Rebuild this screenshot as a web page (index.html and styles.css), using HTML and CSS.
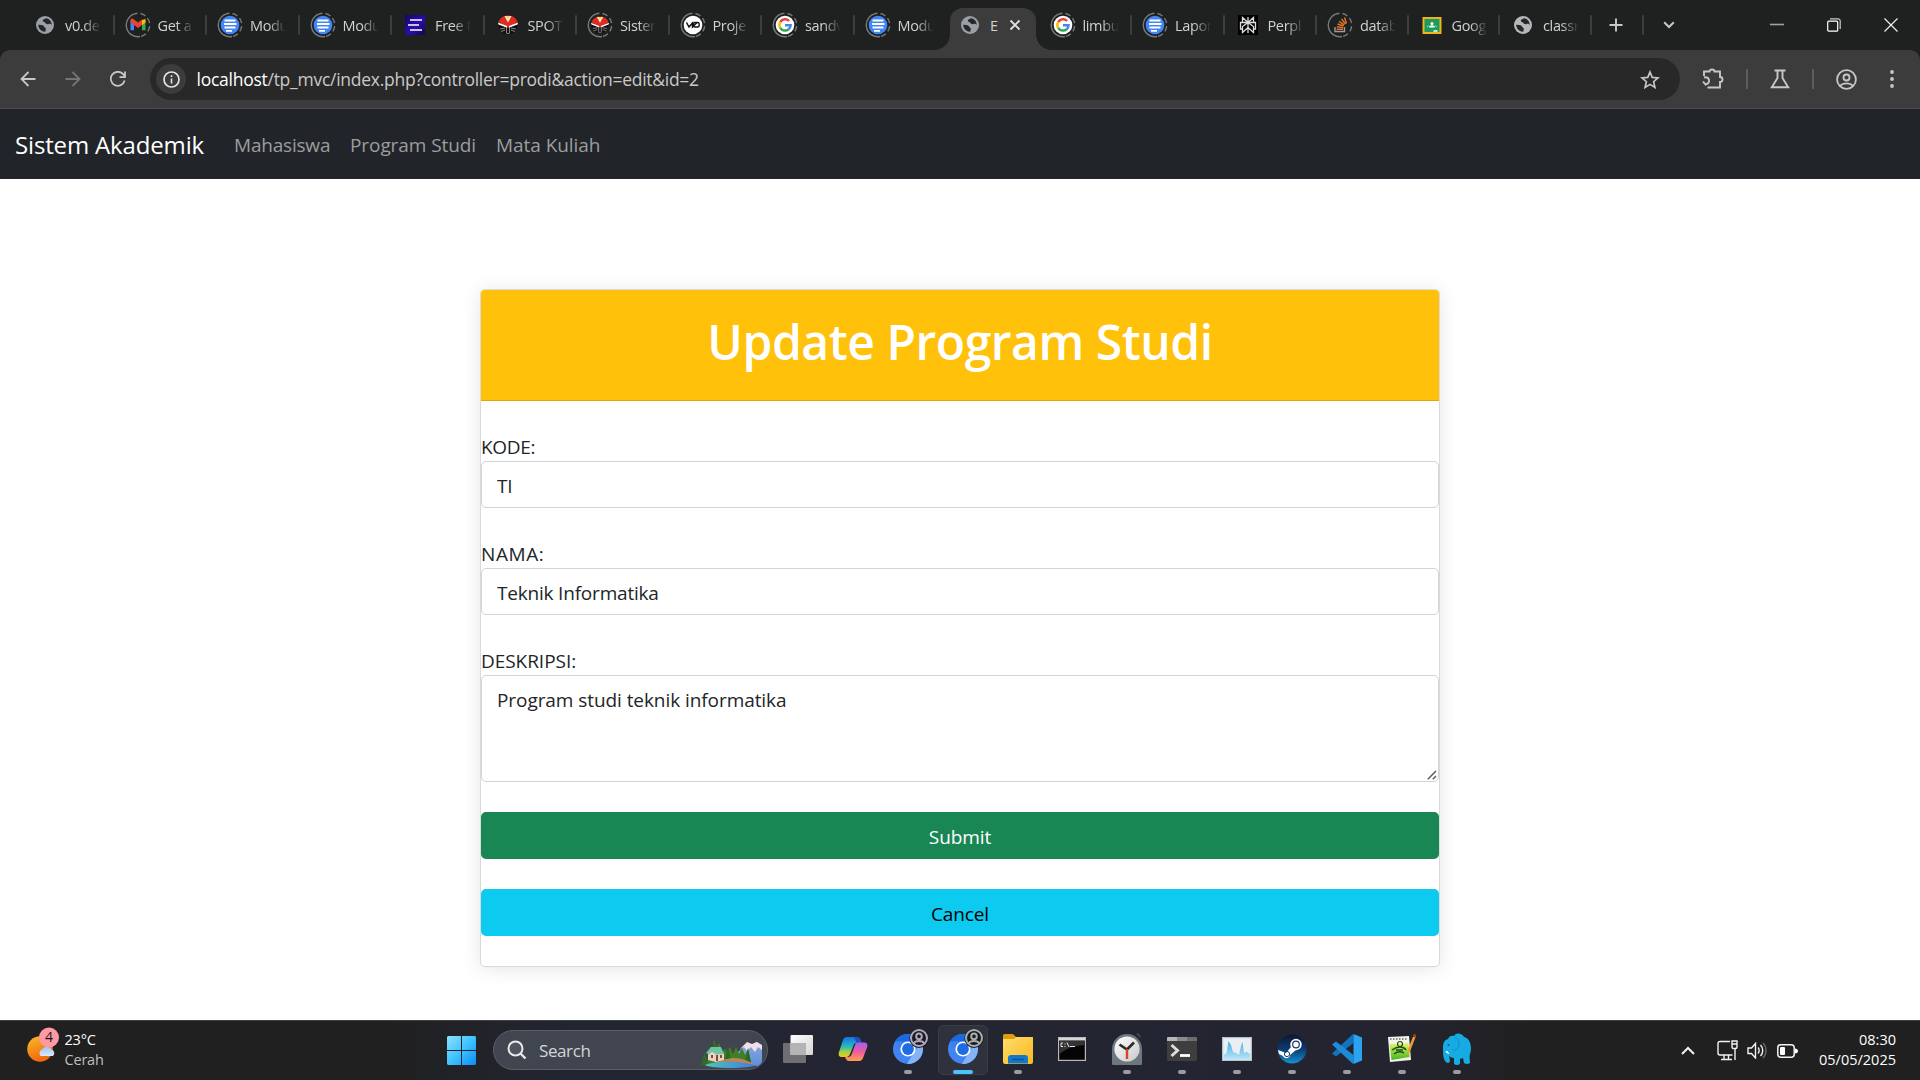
FILE: index.html
```html
<!DOCTYPE html>
<html lang="id">
<head>
<meta charset="utf-8">
<title>Edit Program Studi</title>
<link rel="stylesheet" href="styles.css">
</head>
<body>
<svg class="defs" aria-hidden="true">
  <defs>
    <linearGradient id="gFree" x1="0" y1="0" x2="1" y2="1"><stop offset="0" stop-color="#12095c"/><stop offset=".55" stop-color="#2b0bb5"/><stop offset="1" stop-color="#10083f"/></linearGradient>
    <linearGradient id="gWin" x1="0" y1="0" x2="1" y2="1"><stop offset="0" stop-color="#8fe0ff"/><stop offset=".5" stop-color="#3fc3ff"/><stop offset="1" stop-color="#0a8cf5"/></linearGradient>
    <linearGradient id="gSun" x1="0" y1="0" x2="0.4" y2="1"><stop offset="0" stop-color="#f8bd27"/><stop offset="1" stop-color="#f2660f"/></linearGradient>
    <linearGradient id="gCloud" x1="0" y1="0" x2="0" y2="1"><stop offset="0" stop-color="#9fc3f5"/><stop offset="1" stop-color="#dce9fd"/></linearGradient>
    <linearGradient id="gFolder" x1="0" y1="0" x2="1" y2="1"><stop offset="0" stop-color="#ffdc6b"/><stop offset="1" stop-color="#fbb920"/></linearGradient>
    <linearGradient id="gTask" x1="0" y1="0" x2="1" y2="1"><stop offset="0" stop-color="#fff"/><stop offset="1" stop-color="#d5d5d5"/></linearGradient>
    <linearGradient id="gCopA" x1="0" y1="0" x2="0" y2="1"><stop offset="0" stop-color="#1a6fe0"/><stop offset=".45" stop-color="#22b5c9"/><stop offset=".75" stop-color="#9fd53d"/><stop offset="1" stop-color="#f6c61c"/></linearGradient>
    <linearGradient id="gCopB" x1="0" y1="0" x2="0" y2="1"><stop offset="0" stop-color="#a45df0"/><stop offset=".5" stop-color="#ee5c9c"/><stop offset="1" stop-color="#ffa04e"/></linearGradient>
    <linearGradient id="gSteam" x1="0" y1="0" x2="0" y2="1"><stop offset="0" stop-color="#10152f"/><stop offset=".5" stop-color="#0c3a72"/><stop offset="1" stop-color="#1590cf"/></linearGradient>
    <linearGradient id="gClock" x1="0" y1="0" x2="1" y2="1"><stop offset="0" stop-color="#fff"/><stop offset="1" stop-color="#c8c8c8"/></linearGradient>
    <linearGradient id="gPerf" x1="0" y1="0" x2="0" y2="1"><stop offset="0" stop-color="#48aee0"/><stop offset="1" stop-color="#b9e4fa"/></linearGradient>
    <linearGradient id="gGreen" x1="0" y1="0" x2="0" y2="1"><stop offset="0" stop-color="#e5f76d"/><stop offset="1" stop-color="#41b51e"/></linearGradient>
    <linearGradient id="gLake" x1="0" y1="0" x2="1" y2="0"><stop offset="0" stop-color="#49c7b5"/><stop offset="1" stop-color="#4778e0"/></linearGradient>
    <linearGradient id="gMount" x1="0" y1="0" x2="0" y2="1"><stop offset="0" stop-color="#8fa9d8"/><stop offset="1" stop-color="#5a8fdc"/></linearGradient>
  </defs>
  <symbol id="globe" viewBox="0 0 18 18"><circle cx="9" cy="9" r="9" fill="currentColor"/><path d="M2.200 8.800C3.500 9 5.500 8.800 7 9.500c1.500.7.700 2 2.200 2.200.9.100.6 1.600.1 4C6 16 2.300 13 2.200 8.800zM9.800 2.200c-.8 1-2.900 1-3 2.400-.1 1.600 1.800 1.200 2.300 2.100.6 1.200 2.200 1.800 3.600 1.300 1.200-.5 2.200.3 2.900 1C15.800 5 13 2.400 9.800 2.200z" fill="#25282a"/></symbol>
  <symbol id="ring" viewBox="0 0 26 26"><circle cx="13" cy="13" r="11.700" fill="none" stroke="#777b7e" stroke-width="1.400" stroke-dasharray="38 3 5.500 3 5.500 3 5.500 3 5.500 1.500" transform="rotate(80 13 13)"/></symbol>
  <symbol id="docs" viewBox="0 0 26 26"><use href="#ring"/><circle cx="13" cy="13" r="9.300" fill="#4285f4"/><path d="M7.500 8.500h11M7 12h12.500M7.500 15.500h11M9 18.800h6" stroke="#fff" stroke-width="1.800"/></symbol>
  <symbol id="gmail" viewBox="0 0 26 26"><use href="#ring"/><path d="M5.500 8.500v9.700h3.500v-7z" fill="#4285f4"/><path d="M20.500 8.500v9.700H17v-7z" fill="#34a853"/><path d="M17 8l3.500-1v3.500L17 13z" fill="#fbbc04"/><path d="M5.500 8c0-1.500 2-2 3.500-.6l4 3 4-3V13l-4 3-4-3-3.500-2.500z" fill="#ea4335"/></symbol>
  <symbol id="free" viewBox="0 0 20 20"><rect width="20" height="20" rx="2" fill="url(#gFree)"/><path d="M5 5h12M3 10h11M5 15h12" stroke="#fff" stroke-width="1.700"/></symbol>
  <symbol id="spot" viewBox="0 0 20 20"><circle cx="10" cy="10" r="9.500" fill="#111"/><path d="M.5 7C2 2.500 6 .5 10 .5S18 2.500 19.500 7L10 13z" fill="#e02b22"/><path d="M6.500 1l3.500 6.500L13.500 1z" fill="#f7efc4"/><path d="M8.300 1L10 3.500 11.700 1z" fill="#f6ca18"/><path d="M0 7.500L9 11v8h2v-8l9-3.500-.5 2L11.500 12.500v6h-3v-6L.5 9.500z" fill="#fff"/><path d="M2 14l5-1M3 16.500l4-1.500M18 14l-5-1M17 16.500L13 15" stroke="#888"/></symbol>
  <symbol id="spotring" viewBox="0 0 26 26"><use href="#ring"/><use href="#spot" x="4" y="4" width="18" height="18"/></symbol>
  <symbol id="vz" viewBox="0 0 26 26"><use href="#ring"/><circle cx="13" cy="13" r="9.300" fill="#fff"/><path d="M6.500 10.500l2.500 4.500 3.500-4v4l4.500-4.500" fill="none" stroke="#111" stroke-width="1.500"/><rect x="13.500" y="10.500" width="5.700" height="4.500" rx="1.500" fill="none" stroke="#111" stroke-width="1.400"/></symbol>
  <symbol id="google" viewBox="0 0 26 26"><use href="#ring"/><circle cx="13" cy="13" r="9.300" fill="#fff"/><g fill="none" stroke-width="2.500"><path d="M17.100 9A5.600 5.600 0 0 0 8.200 10.100" stroke="#ea4335"/><path d="M8.200 10.100a5.600 5.600 0 0 0 0 5.800" stroke="#fbbc05"/><path d="M8.200 15.900a5.600 5.600 0 0 0 8.500 1.300" stroke="#34a853"/><path d="M16.700 17.200a5.600 5.600 0 0 0 1.900-3.900H13" stroke="#4285f4"/></g></symbol>
  <symbol id="perp" viewBox="0 0 20 20"><rect width="20" height="20" fill="#000"/><path d="M10 2v16M4.500 2.500L10 7.500l5.500-5V7.500h-11zM4.500 7.500H2.500v6.500h2V11.500L10 7.500l5.500 4V14h2V7.500h-2M4.500 12v5.500L10 12.500l5.500 5V12" fill="none" stroke="#ddd" stroke-width="1.300"/></symbol>
  <symbol id="so" viewBox="0 0 26 26"><use href="#ring"/><path d="M8 15v4.500h9.500V15" fill="none" stroke="#9a9b9b" stroke-width="1.400"/><path d="M9.700 17.300h6.300M9.800 14.800l6.300.8M10.500 12l6 2M12 9.300l5.300 3.500M14.500 7l4 5M17.500 5.500l2 6" stroke="#e0732a" stroke-width="1.400"/></symbol>
  <symbol id="classroom" viewBox="0 0 19 17"><rect x="1" y="1" width="17" height="15" fill="#1d9b5e" stroke="#f2b41b" stroke-width="2"/><circle cx="9.500" cy="6.500" r="1.500" fill="#fff"/><path d="M6.500 10.500c0-3 6-3 6 0M4.500 10.500c0-2 2-2 2-2M14.500 10.500c0-2-2-2-2-2" fill="#fff"/><path d="M11 14h4" stroke="#fff" stroke-width="1.500"/></symbol>
  <symbol id="chromium" viewBox="0 0 36 36"><circle cx="15" cy="20" r="15" fill="#4083f1"/><path d="M2 12.500A15 15 0 0 1 28 12.500H15z" fill="#1a69e2"/><path d="M2 12.500L8.500 24 15 20V12.500z" fill="#3c80f0"/><path d="M28.500 13.500A15 15 0 0 1 14 35l7-12z" fill="#85b3f8"/><circle cx="15" cy="20" r="7.600" fill="#fff"/><circle cx="15" cy="20" r="5.900" fill="#1c6ce5"/><circle cx="26" cy="9.500" r="9.600" fill="#191b20"/><circle cx="26" cy="9" r="8" fill="none" stroke="currentColor" stroke-width="2"/><circle cx="26" cy="7.400" r="2.800" fill="none" stroke="currentColor" stroke-width="2"/><path d="M20.500 14.500c2-3.500 9-3.500 11 0" fill="none" stroke="currentColor" stroke-width="2"/></symbol>
</svg>

<header class="browser">
  <div class="tabstrip">
    <div class="tab"><svg class="fav globe"><use href="#globe"/></svg><span class="title">v0.de</span></div>
    <div class="tab"><svg class="fav ring"><use href="#gmail"/></svg><span class="title">Get a</span></div>
    <div class="tab"><svg class="fav ring"><use href="#docs"/></svg><span class="title">Modu</span></div>
    <div class="tab"><svg class="fav ring"><use href="#docs"/></svg><span class="title">Modu</span></div>
    <div class="tab"><svg class="fav"><use href="#free"/></svg><span class="title">Free I</span></div>
    <div class="tab"><svg class="fav"><use href="#spot"/></svg><span class="title">SPOT</span></div>
    <div class="tab"><svg class="fav ring"><use href="#spotring"/></svg><span class="title">Sister</span></div>
    <div class="tab"><svg class="fav ring"><use href="#vz"/></svg><span class="title">Proje</span></div>
    <div class="tab"><svg class="fav ring"><use href="#google"/></svg><span class="title">sandv</span></div>
    <div class="tab bare"><svg class="fav ring"><use href="#docs"/></svg><span class="title">Modu</span></div>
    <div class="tab bare active"><svg class="fav globe"><use href="#globe"/></svg><span class="title">E</span><svg class="close" viewBox="0 0 12 12"><path d="M1.500 1.500l9 9M10.500 1.500l-9 9" stroke="#e3e3e3" stroke-width="1.800"/></svg></div>
    <div class="tab"><svg class="fav ring"><use href="#google"/></svg><span class="title">limbu</span></div>
    <div class="tab"><svg class="fav ring"><use href="#docs"/></svg><span class="title">Lapor</span></div>
    <div class="tab"><svg class="fav"><use href="#perp"/></svg><span class="title">Perpl</span></div>
    <div class="tab slim"><svg class="fav ring"><use href="#so"/></svg><span class="title">datab</span></div>
    <div class="tab slim"><svg class="fav room"><use href="#classroom"/></svg><span class="title">Goog</span></div>
    <div class="tab slim"><svg class="fav globe pale"><use href="#globe"/></svg><span class="title">classr</span></div>
    <div class="newtab"><svg width="14" height="14" viewBox="0 0 14 14"><path d="M7 .5v13M.5 7h13" stroke="#c8c8c8" stroke-width="1.900"/></svg></div>
    <div class="tabsearch"><svg width="12" height="8" viewBox="0 0 12 8"><path d="M1.200 1.200L6 6l4.800-4.800" fill="none" stroke="#c8c8c8" stroke-width="2"/></svg></div>
    <div class="winctl">
      <svg width="14" height="14" viewBox="0 0 14 14"><path d="M0 6.500h14" stroke="#a0a0a0" stroke-width="1.600"/></svg>
      <svg width="14" height="14" viewBox="0 0 14 14"><rect x=".7" y="3.200" width="10" height="10" rx="1" fill="none" stroke="#fff" stroke-width="1.200"/><path d="M3 .8h8a2.200 2.200 0 0 1 2.200 2.200v8" fill="none" stroke="#ccc" stroke-width="1.200"/></svg>
      <svg width="14" height="14" viewBox="0 0 14 14"><path d="M.5.5l13 13M13.500.5l-13 13" stroke="#eee" stroke-width="1.200"/></svg>
    </div>
  </div>
  <div class="toolbar">
    <div class="navbtns">
      <svg width="16" height="16" viewBox="0 0 16 16"><path d="M15.500 8H1.500M8.500 1L1.500 8l7 7" fill="none" stroke="#c7c7c7" stroke-width="1.800"/></svg>
      <svg width="16" height="16" viewBox="0 0 16 16"><path d="M.5 8h14M7.500 1l7 7-7 7" fill="none" stroke="#757575" stroke-width="1.800"/></svg>
      <svg width="16" height="16" viewBox="0 0 16 16"><path d="M14.600 9.500a7 7 0 1 1-1.500-6.300L15 5.500M15 .5v5.700H9.500" fill="none" stroke="#c7c7c7" stroke-width="1.800"/></svg>
    </div>
    <div class="omnibox">
      <span class="siteinfo"><svg width="17" height="17" viewBox="0 0 17 17"><circle cx="8.500" cy="8.500" r="7.500" fill="none" stroke="#e3e3e3" stroke-width="1.700"/><path d="M8.500 7.500v5M8.500 4.300v1.700" stroke="#e3e3e3" stroke-width="1.600"/></svg></span>
      <span class="url"><b>localhost</b>/tp_mvc/index.php?controller=prodi&amp;action=edit&amp;id=2</span>
      <svg class="star" width="20" height="19" viewBox="0 0 20 19"><path d="M10 2l2.200 5.400 5.800.5-4.400 3.800 1.300 5.700L10 14.400l-4.900 3 1.300-5.700L2 7.900l5.800-.5z" fill="none" stroke="#c7c7c7" stroke-width="1.700"/></svg>
    </div>
    <div class="actions">
      <svg width="22" height="22" viewBox="0 0 22 22"><path d="M2 8V3.500h5.500a2.500 2 0 0 1 5 0H18V9a2.200 2.200 0 0 1 0 5v5.500H5.500M2 9.500c2.500-.5 4.500.5 5 2.500s-1 4-3.500 4.500M1 13.500l2.500 3L7 14.500" fill="none" stroke="#c7c7c7" stroke-width="1.900"/></svg>
      <i></i>
      <svg width="20" height="20" viewBox="0 0 20 20"><path d="M4.500 1.500h11M7.500 2v7L1.800 18.300h16.400L12.500 9V2" fill="none" stroke="#c7c7c7" stroke-width="1.900"/></svg>
      <i></i>
      <svg width="21" height="21" viewBox="0 0 21 21"><circle cx="10.500" cy="10.500" r="9.400" fill="none" stroke="#c7c7c7" stroke-width="1.800"/><circle cx="10.500" cy="8.500" r="3" fill="none" stroke="#c7c7c7" stroke-width="1.800"/><path d="M4 17c3-3.500 10-3.500 13 0" fill="none" stroke="#c7c7c7" stroke-width="1.800"/></svg>
      <svg class="menu" width="4" height="18" viewBox="0 0 4 18"><g fill="#c7c7c7"><circle cx="2" cy="2" r="1.900"/><circle cx="2" cy="9" r="1.900"/><circle cx="2" cy="16" r="1.900"/></g></svg>
    </div>
  </div>
</header>

<nav class="navbar">
  <a class="brand">Sistem Akademik</a>
  <a class="link">Mahasiswa</a>
  <a class="link studi">Program Studi</a>
  <a class="link matkul">Mata Kuliah</a>
</nav>

<main class="page">
  <form class="card">
    <div class="card-header"><h1>Update Program Studi</h1></div>
    <div class="field"><label>KODE:</label><input type="text" value="TI"></div>
    <div class="field"><label class="nama">NAMA:</label><input type="text" value="Teknik Informatika"></div>
    <div class="field"><label class="desk">DESKRIPSI:</label><textarea>Program studi teknik informatika</textarea>
      <svg class="grip" width="10" height="10" viewBox="0 0 10 10"><path d="M.8 9.200L9 1M5.800 9.200L9 6" stroke="#555" stroke-width="1.400"/></svg></div>
    <button type="button" class="btn success">Submit</button>
    <button type="button" class="btn info">Cancel</button>
  </form>
</main>

<footer class="taskbar">
  <div class="weather">
    <svg width="34" height="36" viewBox="0 0 34 36"><circle cx="13" cy="22" r="12.800" fill="url(#gSun)"/><path d="M14 29a3.700 3.700 0 0 1 1-6.500 5.500 5.500 0 0 1 9.500 0 3.500 3.500 0 0 1 1 6.500z" fill="url(#gCloud)"/><circle cx="22" cy="10.500" r="10" fill="#ff99a4"/></svg>
    <span class="count">4</span>
    <div class="lines"><span>23°C</span><span class="dim">Cerah</span></div>
  </div>
  <div class="apps">
    <div class="start"><svg width="29" height="29" viewBox="0 0 29 29"><path d="M1 0h13v14H0V1zM15 0h13l1 1v13H15zM0 15h14v14H1l-1-1zM15 15h14v13l-1 1H15z" fill="url(#gWin)"/></svg></div>
    <div class="search">
      <svg width="20" height="20" viewBox="0 0 20 20"><circle cx="8.500" cy="8.500" r="7" fill="#50545e" stroke="#e8e8e8" stroke-width="2"/><path d="M13.500 13.500l5 5" stroke="#e8e8e8" stroke-width="2.400"/></svg>
      <span>Search</span>
      <svg class="scene" width="62" height="30" viewBox="0 0 62 30"><path d="M37 24V13l9-9 4 3 5-4 6 4v16a12 12 0 0 1-4 4z" fill="url(#gMount)"/><path d="M39 10l7-7 5 2 5-2 5 3v5l-4-3-3 5-4-5-4 4-3-4z" fill="#f1dfeb"/><path d="M6 24l3-16 2 3 2-10 3 8 2-5 3 9 3-3 2 3 3-5 3 7 3-7 3 7 3-6 3 7 3-6 3 15z" fill="#437d27"/><path d="M13 1l3 13h-6zM27 7l3 15h-6zM47 9l3 14h-6z" fill="#2c6a22"/><path d="M0 26L3.500 13 7 26z" fill="#2f6c2a"/><path d="M4 26c16-3 20-7 29-7s17 4 22 8z" fill="#bd8553"/><path d="M4 26c18-6 36-3 51 0-4 4-47 4-51 0z" fill="url(#gLake)"/><path d="M7 14l8-3 8 3v7l-8 2-8-2z" fill="#ead4bd"/><path d="M5 14l5-6h10l3 7-8 .5-4-3-3 3z" fill="#6cc4a5"/><path d="M10 16h2v3h-2zM15 16h2v6h-2zM19 16h2v3h-2z" fill="#83483d"/></svg>
    </div>
    <div class="app"><svg width="30" height="30" viewBox="0 0 30 30"><rect y="9" width="23" height="20" rx="1" fill="#6f6f71"/><rect x="7.500" y="1" width="22.500" height="20" rx="1" fill="url(#gTask)"/><path d="M7.500 9H23v12H7.500z" fill="#b4b4b4"/></svg></div>
    <div class="app"><svg width="30" height="28" viewBox="0 0 30 28"><path d="M9 2h10c2 0 3 1.500 3.500 3l1 3h-5c-2 0-2.500 1-3 2.500L12 19c-.6 2-2 3-4 3H4c-3 0-4-2-3-5L5 5c.7-2 2-3 4-3z" fill="url(#gCopA)"/><path d="M16 2h3c2 0 3 1.500 3.500 3l1 3h-5z" fill="#1d4fc0"/><path d="M21 26H11c-2 0-3-1.500-3.500-3l-.5-1h3c2 0 3-1 3.500-2.500L17 10c.6-2 2-2.500 4-2.500h5c3 0 4 2 3 5L25 23c-.7 2-2 3-4 3z" fill="url(#gCopB)"/></svg></div>
    <div class="app run"><svg class="chr one" width="36" height="36"><use href="#chromium"/></svg></div>
    <div class="app run active"><svg class="chr" width="36" height="36"><use href="#chromium"/></svg></div>
    <div class="app run"><svg width="30" height="30" viewBox="0 0 30 30"><path d="M0 6V1.500Q0 0 1.500 0H10L13 3v5H0z" fill="#e09c11"/><path d="M0 5h11l2-2h17v25q0 2-2 2H2q-2 0-2-2z" fill="url(#gFolder)"/><path d="M5 29.500V24q0-3 3-3h14q3 0 3 3v5.500z" fill="#1477c9"/><path d="M9 25.500h12" stroke="#0b549a" stroke-width="1.500"/></svg></div>
    <div class="app"><svg width="28" height="24" viewBox="0 0 28 24"><rect x=".6" y=".6" width="26.800" height="22.800" fill="#050505" stroke="#b9b9b9" stroke-width="1.200"/><path d="M1 1h26v2.500H1z" fill="#d7d7d7"/><path d="M1.500 4h25v4Q10 9 1.500 17z" fill="#343434"/><path d="M3 6v3.500M3 6h2M3 9.500h2M7 6.500v1M7 9v1M9 5.500l2 4.500M12 9.500h5" stroke="#e5e5e5" fill="none"/></svg></div>
    <div class="app run"><svg width="30" height="32" viewBox="0 0 30 32"><path d="M0 16A15 15 0 0 1 30 16v15q0 1-1 1H1q-1 0-1-1z" fill="#6c777e"/><path d="M24 1l4 4 1-2-3-3z" fill="#444"/><circle cx="15" cy="16" r="12.600" fill="url(#gClock)"/><path d="M7.500 11.500L15 16.500l7-7" fill="none" stroke="#2b2b2b" stroke-width="2.600"/><path d="M15 16v10" stroke="#dd431c" stroke-width="2.400"/></svg></div>
    <div class="app run"><svg width="30" height="24" viewBox="0 0 30 24"><rect width="30" height="24" rx="1" fill="#3e3e3e"/><path d="M0 1q0-1 1-1h9v4H0z" fill="#b7b7b7"/><path d="M10 0h10v4H10z" fill="#8b8b8b"/><path d="M20 0h9q1 0 1 1v3H20z" fill="#6d6d6d"/><path d="M4.500 8l6 5.500-6 5.500" fill="none" stroke="#ddd" stroke-width="3"/><path d="M13 18.500h10" stroke="#fff" stroke-width="2.800"/></svg></div>
    <div class="app run"><svg width="30" height="24" viewBox="0 0 30 24"><rect x=".6" y=".6" width="28.800" height="22.800" fill="#e9eff3" stroke="#b4c3cc" stroke-width="1.200"/><path d="M1.500 22.500V18l3-2L6.500 4 9 8l2 7 3 1 3 2 2-9 1.500-4L22 16l3-1 3 2v5.500z" fill="url(#gPerf)"/></svg></div>
    <div class="app run"><svg width="30" height="30" viewBox="0 0 30 30"><circle cx="15" cy="15" r="14.500" fill="url(#gSteam)"/><path d="M1 16l8 3 5-6 5 3-6 5c0 4-6 4-7 1l-4-2z" fill="#fff"/><circle cx="19" cy="10.500" r="5.700" fill="#fff"/><circle cx="19" cy="10.500" r="3.300" fill="none" stroke="#173a65" stroke-width="1.200"/><circle cx="10" cy="20" r="2.600" fill="none" stroke="#173a65"/></svg></div>
    <div class="app run"><svg width="30" height="30" viewBox="0 0 30 30"><path d="M21.500 0v9L4 22.500 0 19.500 20 1z" fill="#1173bd"/><path d="M21.500 30v-9L4 7.500 0 10.500 20 29z" fill="#1c8bd8"/><path d="M21.500 0L30 3.500v23L21.500 30z" fill="#2aa3f0"/></svg></div>
    <div class="app run"><svg width="30" height="30" viewBox="0 0 30 30"><path d="M1 3l21-1 2 24-21 2z" fill="#f4f4ec"/><path d="M2.500 10l19-1 1 14-18 3z" fill="url(#gGreen)"/><path d="M3 5h18" stroke="#868686" stroke-width="2" stroke-dasharray="1.500 1.500"/><circle cx="13" cy="10" r="2.500" fill="none" stroke="#214f16" stroke-width="1.200"/><path d="M5 16q4-3 8-3t6 3M7 20q5-4 10-1M9 16h7" fill="none" stroke="#214f16" stroke-width="1.500"/><path d="M21 19L28 1" stroke="#eca12c" stroke-width="2.500"/><path d="M27 3l1-3" stroke="#9c2f25" stroke-width="2.500"/></svg></div>
    <div class="app run"><svg width="28" height="32" viewBox="0 0 28 32"><path d="M5 6c1-3 4-4 6-3 2-4 8-3 10 1 5 1 7 6 7 12-.2 3-1 5-1.500 7l.5 7q-3 2-6 0l-1-5-3 1v5q-3 2-6 0v-6c-2 0-4-1-5-2l1 4c0 3-2 4-4 2-3-3-3-8-3-13 0-6 1-9 5-10z" fill="#16abe3"/><path d="M12 4c5 2 5 9 2 12-2 2-4 1-5 0" fill="none" stroke="#0e8fc4"/><path d="M2.500 18q1 3 4 3l-2-3z" fill="#fff"/><circle cx="5.500" cy="12" r=".9" fill="#07547e"/></svg></div>
  </div>
  <div class="tray">
    <svg width="14" height="9" viewBox="0 0 14 9"><path d="M1 8l6-6 6 6" fill="none" stroke="#f2f2f2" stroke-width="2"/></svg>
    <svg class="net" width="21" height="21" viewBox="0 0 21 21"><path d="M13 1.500H3A2 2 0 0 0 1 3.500v9.500a2 2 0 0 0 2 2h12.500M4 19.500h11M7 15v4M11.500 15v4M18 8v12" fill="none" stroke="#f2f2f2" stroke-width="1.400"/><path d="M15 1h5v6a1.500 1.500 0 0 1-1.500 1.500h-2A1.500 1.500 0 0 1 15 7zM15 4h5" fill="none" stroke="#f2f2f2" stroke-width="1.400"/></svg>
    <svg class="vol" width="20" height="17" viewBox="0 0 20 17"><path d="M1 6v5.500h3.500L8.500 16V1.500L4.500 6z" fill="none" stroke="#f2f2f2" stroke-width="1.400"/><path d="M11 5.500c1.500 1.500 1.500 4.500 0 6M13.500 3c3 3 3 8 0 11" fill="none" stroke="#f2f2f2" stroke-width="1.400"/><path d="M16 1c4 4 4 11 0 15" fill="none" stroke="#666" stroke-width="1.400"/></svg>
    <svg class="bat" width="21" height="14" viewBox="0 0 21 14"><rect x=".8" y=".8" width="16.400" height="12.400" rx="3" fill="none" stroke="#f2f2f2" stroke-width="1.500"/><rect x="3" y="3" width="5" height="8" rx="1" fill="#fff"/><path d="M18 4.500q3 .5 3 2.500t-3 2.500z" fill="#fff"/></svg>
    <div class="clock"><span>08:30</span><span>05/05/2025</span></div>
  </div>
</footer>
</body>
</html>
```
FILE: styles.css
```css
* { box-sizing: border-box; }
html, body { height: 100%; }
body {
  margin: 0;
  display: flex;
  flex-direction: column;
  overflow: hidden;
  background: #fff;
  color: #212529;
  font-family: "Open Sans", "Noto Sans", sans-serif;
  font-size: 19px;
  line-height: 30px;
}
svg { display: block; flex: none; }
.defs { position: absolute; width: 0; height: 0; }

/* Browser window */
.browser { flex: none; height: 109px; background: #1f2121; }
.tabstrip { display: flex; height: 50px; padding-left: 22px; }
.tab {
  position: relative;
  flex: none;
  display: flex;
  align-items: center;
  width: 92.5px;
  height: 50px;
  padding-left: 10px;
  font-size: 14.5px;
  letter-spacing: -0.35px;
  color: #d0d1d1;
}
.tab.slim { width: 91.5px; }
.tab:not(.bare)::after,
.tabsearch::before {
  content: "";
  width: 2px;
  height: 20px;
  border-radius: 1px;
  background: #3d3f3f;
  margin-left: auto;
}
.fav { width: 20px; height: 20px; margin: 0 3px; }
.fav.globe { width: 18px; height: 18px; margin: 0 4px; color: #9aa0a6; }
.fav.globe.pale { color: #b5b7b9; }
.fav.ring { width: 26px; height: 26px; margin: 0; }
.fav.room { width: 20px; height: 17px; }
.title {
  width: 37px;
  margin: 2px 0 0 7px;
  white-space: nowrap;
  -webkit-mask-image: linear-gradient(90deg, #000 50%, transparent 97%);
  mask-image: linear-gradient(90deg, #000 50%, transparent 97%);
}
.active.tab .title {
  width: 5px;
  -webkit-mask-image: none;
  mask-image: none;
}
.active.tab { z-index: 1; }
.active.tab > * { position: relative; }
.active.tab .close { width: 12px; height: 12px; margin-left: 14px; }
.active.tab::before {
  content: "";
  position: absolute;
  left: 3px;
  top: 8px;
  width: 86px;
  height: 42px;
  border-radius: 13px 13px 0 0;
  background: #3c3c3c;
}
.active.tab::after {
  display: block;
  content: "";
  position: absolute;
  left: -12px;
  bottom: 0;
  width: 116px;
  height: 15px;
  background:
    radial-gradient(circle at 0 0, transparent 14.5px, #3c3c3c 15px) left / 15px 15px no-repeat,
    radial-gradient(circle at 100% 0, transparent 14.5px, #3c3c3c 15px) right / 15px 15px no-repeat;
}
.newtab { display: flex; align-items: center; width: 50px; padding-left: 17px; }
.tabsearch { display: flex; align-items: center; gap: 19px; }
.winctl { display: flex; align-items: center; gap: 43px; margin-left: auto; padding-right: 22px; }

.toolbar {
  display: flex;
  align-items: center;
  height: 59px;
  border-bottom: 1px solid #4b4c4d;
  border-radius: 10px 10px 0 0;
  background: #3c3c3c;
}
.navbtns { display: flex; gap: 29px; width: 150px; padding-left: 19.5px; }
.omnibox {
  display: flex;
  align-items: center;
  width: 1530px;
  height: 42px;
  padding: 0 20px 0 6px;
  border-radius: 21px;
  background: #282828;
}
.siteinfo {
  display: grid;
  place-items: center;
  width: 30px;
  height: 30px;
  border-radius: 50%;
  background: #3c3c3c;
}
.url { margin: 0 0 0 10.5px; font-size: 17.5px; letter-spacing: -0.26px; color: #c9c9c9; white-space: nowrap; }
.url b { font-weight: 400; color: #fff; }
.star { margin-left: auto; }
.actions { display: flex; flex: 1; align-items: center; gap: 22px; padding-left: 21.5px; }
.actions i { width: 2px; height: 20px; background: #5b5c5d; }
.actions .menu { margin-left: 11px; }

/* Site navigation */
.navbar {
  flex: none;
  display: flex;
  align-items: center;
  height: 70px;
  padding: 1px 15px 0;
  background: #212529;
}
.brand { width: 219px; font-size: 24px; letter-spacing: -0.15px; color: #fff; white-space: nowrap; }
.link { width: 116px; letter-spacing: -0.2px; color: #9b9d9e; white-space: nowrap; }
.link.studi { width: 146px; letter-spacing: -0.08px; }
.link.matkul { letter-spacing: -0.05px; }

/* Form */
.page { flex: 1; padding-top: 110px; }
.card {
  display: flex;
  flex-direction: column;
  gap: 30px;
  width: 960px;
  height: 678px;
  margin: 0 auto;
  border: 1px solid #d9dadb;
  border-radius: 5px;
  box-shadow: 0 2px 20px rgba(0, 0, 0, .1);
  background: #fff;
}
.card-header {
  height: 111px;
  padding-top: 22px;
  border-bottom: 1px solid #dea906;
  border-radius: 4px 4px 0 0;
  background: #ffc10a;
}
h1 { margin: 0; font-size: 48px; font-weight: 600; line-height: 60px; letter-spacing: -0.45px; text-align: center; color: #fff; }
.field { position: relative; display: flex; flex-direction: column; }
label { height: 30px; padding-top: 2px; line-height: 28px; letter-spacing: -0.3px; }
label.nama { letter-spacing: 0.6px; }
label.desk { letter-spacing: -0.05px; }
input, textarea {
  display: block;
  width: 100%;
  height: 47px;
  margin: 0;
  padding: 8px 15px 6px;
  border: 1px solid #ced4da;
  border-radius: 5px;
  outline: 0;
  background: #fff;
  color: #212529;
  font: inherit;
  letter-spacing: -0.2px;
}
textarea { height: 107px; padding-top: 9px; resize: none; overflow: hidden; letter-spacing: -0.07px; }
.grip { position: absolute; right: 2px; bottom: 2px; }
.btn {
  height: 47px;
  padding: 3px 0 0;
  border: 0;
  border-radius: 5px;
  font: inherit;
  letter-spacing: -0.1px;
}
.success { background: #198754; color: #fff; }
.info { background: #0dcaf0; color: #000; }

/* Taskbar */
.taskbar {
  position: relative;
  flex: none;
  display: flex;
  height: 60px;
  border-top: 1px solid #3f4142;
  background: linear-gradient(90deg, #202020 20%, #222632 30%, #242431 72%, #202020 80%);
  color: #fff;
}
.weather { position: relative; display: flex; width: 434px; padding: 6px 0 0 27px; }
.weather .count { position: absolute; left: 45px; top: 6px; font-size: 14px; line-height: 20px; color: #241416; }
.lines { display: flex; flex-direction: column; margin: 3px 0 0 3.5px; font-size: 14.5px; line-height: 20px; letter-spacing: -0.2px; }
.dim { color: #bfbfbf; }
.apps { display: flex; }
.start { width: 59px; padding: 15px 0 0 13px; }
.search {
  display: flex;
  align-items: center;
  width: 275px;
  height: 40px;
  margin: 9px 2.5px 0 0;
  padding: 0 4px 0 13px;
  border: 1px solid #5b5e67;
  border-radius: 20px;
  background: #414550;
  font-size: 17px;
  letter-spacing: -0.4px;
  color: #d4d5d8;
}
.search span { margin: 1px 0 0 12px; }
.scene { margin-left: auto; margin-top: 7px; }
.app {
  position: relative;
  display: grid;
  place-items: center;
  width: 54.9px;
  height: 50px;
  padding-bottom: 2px;
  margin-top: 4px;
}
.app.active::before {
  content: "";
  position: absolute;
  inset: 0 2.5px;
  border: 1px solid #3a3c48;
  border-radius: 5px;
  background: #2f313d;
}
.app svg { position: relative; }
.app .chr { left: 3px; top: -2px; color: #a9adac; }
.app .chr.one { color: #b3a5bb; }
.app.run::after {
  content: "";
  position: absolute;
  left: 50%;
  bottom: 1px;
  width: 8px;
  height: 4px;
  margin-left: -4px;
  border-radius: 2px;
  background: #9b9ba1;
}
.app.active.run::after { width: 20px; margin-left: -10px; background: #4cc2ff; }
.tray { display: flex; align-items: center; margin-left: auto; padding-right: 24px; }
.net { margin-left: 22.5px; }
.vol { margin-left: 9px; }
.bat { margin-left: 10px; }
.clock { display: flex; flex-direction: column; align-items: flex-end; width: 98px; margin-top: -2px; font-size: 14.5px; line-height: 20px; letter-spacing: 0; }
```
